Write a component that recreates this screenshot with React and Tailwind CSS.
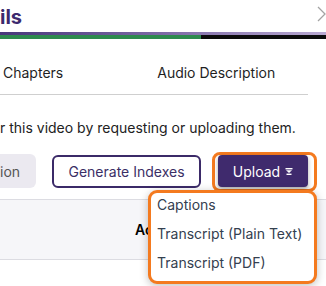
import React from "react";

function UploadIcon() {
  return (
    <svg width="8" height="7" viewBox="0 0 8 7" className="ml-[5px]">
      <rect x="0.5" y="0" width="7" height="1.4" fill="#fff" />
      <polygon points="1,2.2 7,2.2 4,5" fill="#fff" />
      <rect x="1.5" y="5.6" width="5" height="1.4" fill="#fff" />
    </svg>
  );
}

export default function App() {
  return (
    <div className="relative w-[326px] h-[286px] overflow-hidden bg-white font-['Inter',sans-serif]">
      {/* header */}
      <div className="flex h-[32px] items-start justify-between">
        <h2 className="pt-[3px] text-[20px] font-bold leading-[28px] text-[#3c2a6e]">ils</h2>
        <svg width="9" height="16" viewBox="0 0 9 16" className="mt-[6px]">
          <polyline points="1,1 8,8 1,15" fill="none" stroke="#a3a3a3" strokeWidth="1.3" />
        </svg>
      </div>
      {/* video progress strip */}
      <div className="h-[3px] bg-gradient-to-r from-[#47387a] via-[#7d6aa6] to-[#b9a9d2]" />
      <div className="flex h-[4px]">
        <div className="w-[201px] bg-[#2e8a4e]" />
        <div className="flex-1 bg-[#0b0b0b]" />
      </div>

      {/* tabs */}
      <div className="mt-[24px] flex text-[14px] leading-5 text-[#1f1f1f]">
        <span className="ml-[3px]">Chapters</span>
        <span className="ml-[94px]">Audio Description</span>
      </div>
      <div className="mt-[11px] h-px w-[308px] bg-[#cfcfcf]" />

      <p className="mt-[23px] whitespace-nowrap text-[14px] leading-5 text-[#222]">
        r this video by requesting or uploading them.
      </p>

      {/* actions */}
      <div className="mt-[14px] flex items-start">
        <button className="mt-[2px] flex h-[34px] w-[36px] items-center rounded-r-md bg-[#ebe9f0] text-[14px] text-[#555]">
          ion
        </button>
        <button className="ml-[16px] mt-[3px] h-[33px] w-[149px] rounded-md border-2 border-[#3b2a68] bg-white text-[14px] text-[#3b2f66]">
          Generate Indexes
        </button>
        <div className="ml-[11px] rounded-[8px] border-[3px] border-[#f47a1f] pb-[2px] pl-[3px] pr-[6px]">
          <button className="flex h-[32px] w-[90px] items-center justify-center rounded-[4px] bg-[#3f2a6d] text-[14px] text-white shadow-[0_2px_4px_rgba(0,0,0,0.35)]">
            Upload
            <UploadIcon />
          </button>
        </div>
      </div>

      {/* table header */}
      <div className="mt-[7px] flex h-[61px] items-center border-y border-[#dcdce2] bg-[#f6f6f9]">
        <span className="ml-[135px] text-[14px] font-semibold text-black">Actions</span>
      </div>

      {/* dropdown menu */}
      <div className="absolute left-[148px] top-[190px] w-[169px] rounded-[9px] border-[3px] border-[#f47a1f] bg-white pb-[8px] pl-[6px] pt-[2px] shadow-[0_2px_8px_rgba(0,0,0,0.25)]">
        <ul className="flex flex-col gap-[9px] text-[14px] leading-5 text-[#34404f]">
          <li>Captions</li>
          <li className="whitespace-nowrap">Transcript (Plain Text)</li>
          <li>Transcript (PDF)</li>
        </ul>
      </div>
    </div>
  );
}
